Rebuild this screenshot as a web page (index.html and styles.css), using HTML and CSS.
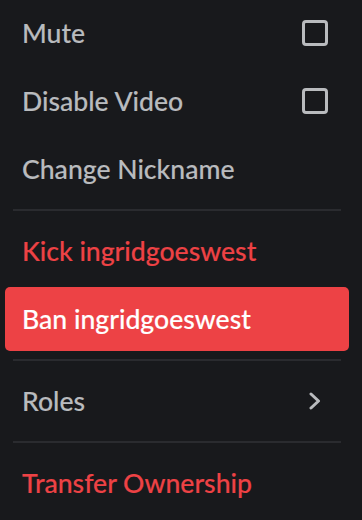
FILE: index.html
```html
<!DOCTYPE html>
<html>
<head>
<meta charset="utf-8">
<link rel="stylesheet" href="styles.css">
</head>
<body>
<div class="menu">
  <div class="item"><span class="label">Mute</span><span class="checkbox"></span></div>
  <div class="item"><span class="label">Disable Video</span><span class="checkbox"></span></div>
  <div class="item"><span class="label">Change Nickname</span></div>
  <div class="sep"></div>
  <div class="item danger"><span class="label">Kick ingridgoeswest</span></div>
  <div class="item danger active"><span class="label">Ban ingridgoeswest</span></div>
  <div class="sep"></div>
  <div class="item"><span class="label">Roles</span>
    <svg class="chevron" width="12" height="18" viewBox="0 0 12 18"><path d="M2 2 L9.5 9 L2 16" fill="none" stroke="#b9bbbe" stroke-width="3" stroke-linecap="round" stroke-linejoin="round"/></svg>
  </div>
  <div class="sep"></div>
  <div class="item danger"><span class="label">Transfer Ownership</span></div>
</div>
</body>
</html>
```
FILE: styles.css
```css
html, body {
  margin: 0;
  padding: 0;
  background: #18191c;
  height: 100%;
  overflow: hidden;
}
.menu {
  padding: 1px 13px 0 5px;
  width: 344px;
  display: flex;
  flex-direction: column;
  gap: 4px;
  font-family: Lato, "Open Sans", sans-serif;
  font-size: 26.6px;
  font-weight: 500;
}
.item {
  height: 64px;
  display: flex;
  align-items: center;
  justify-content: space-between;
  padding: 0 21px 0 17px;
  color: #b9bbbe;
  border-radius: 5px;
}
.label {
  -webkit-text-stroke: 0.15px currentColor;
}
.item.danger {
  color: #ed4245;
}
.item.active {
  background: #ed4245;
  color: #ffffff;
}
.sep {
  height: 2px;
  margin: 4px 8px;
  background: #2a2b2f;
}
.checkbox {
  width: 20px;
  height: 20px;
  border: 3px solid #b9bbbe;
  border-radius: 4px;
}
.chevron {
  margin-right: 7px;
}
```
